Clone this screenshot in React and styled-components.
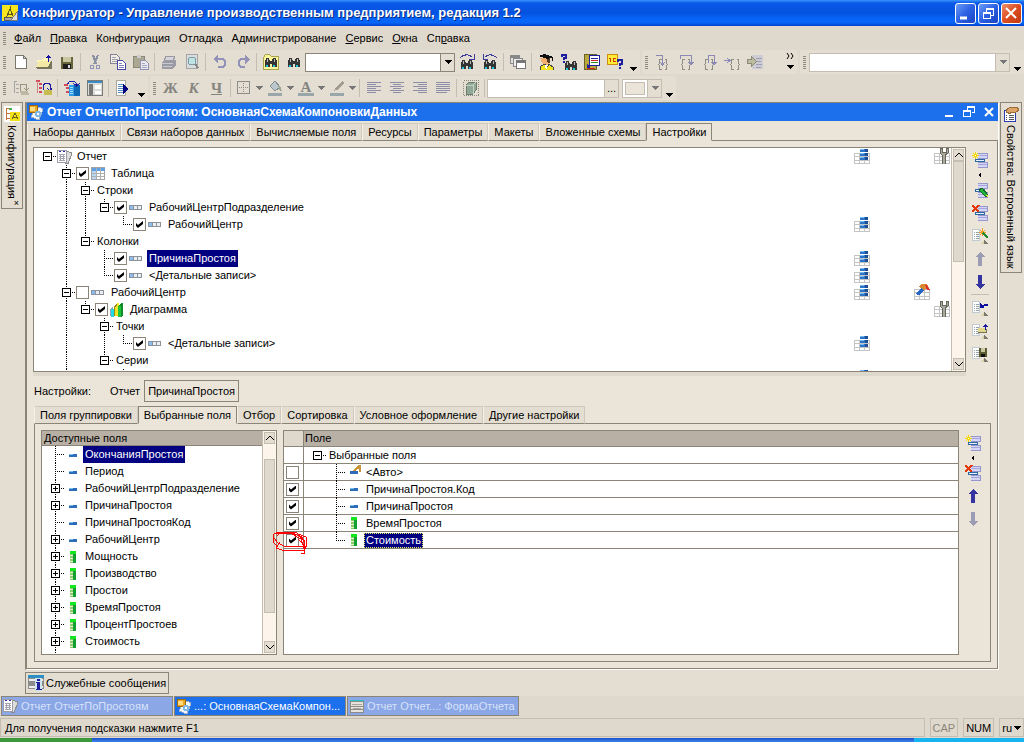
import React from 'react';
import styled, { createGlobalStyle, css } from 'styled-components';

const color = {
  face: '#dfd8cc',
  bar: '#e4ddd1',
  page: '#ebe4d9',
  edge: '#8b8578',
  soft: '#c5bdb0',
  head: '#b8b0a5',
  blue: '#1c70ec',
  select: '#000080',
};

/* ---------- icons ---------- */

const sheet = (
  <>
    <path d="M9 2l6 2-4 11-5-2z" fill="#dcdcdc" stroke="#8b8b8b" />
    <path d="M.5 1.500h9v12h-9z" fill="#fff" stroke="#9d9da8" />
    <path d="M2 2.500h2M6 2.500h2" stroke="#2a2ab0" />
    <path d="M2 5.500h6M2 7.500h6M2 9.500h6M2 11.500h6M3.500 5v7M6.500 5v7" stroke="#a4a4b0" />
  </>
);

const doc = (
  <>
    <path d="M.5 1.500h7v11h-7z" fill="#fff" stroke="#c2ccd0" />
    <path d="M2 4.500h1M4 4.500h3M2 6.500h1M4 6.500h3M2 8.500h1M4 8.500h3M2 10.500h1M4 10.500h3" stroke="#93a3a8" />
    <path d="M8 16l4-4v4z" fill="#d8d4ac" />
    <path d="M12 12l4 4h-4z" fill="#77776a" />
  </>
);

const levels = (
  <>
    <path d="M6 1h10v6H6zM6 10h10v6H6z" fill="#d5d5f6" />
    <path d="M6 1.500h10M6 6.500h10M6 10.500h10M6 15.500h10M15.500 1v6M15.500 10v6" stroke="#9797cf" />
    <path d="M6 3.500h9M6 12.500h9" stroke="#a5a5dc" />
    <path d="M3.500 7.500h9v2h-9z" fill="#e8f1ff" stroke="#2d68a0" />
  </>
);

const glasses = (
  <>
    <path d="M3 4h3l1 3v6H2V8zM10 4h3l1 4v5H9V7z" fill="#343434" />
    <path d="M6 7h4v3H6z" fill="#343434" />
    <path d="M4 5h1v3H4zM11 5h1v3h-1z" fill="#bbb" />
    <path d="M3 11h2v2H3zM10 11h2v2h-2z" fill="#18c8dc" />
  </>
);

const cogBraces = (
  <path d="M6.500 5.500h-2v4l-1 1 1 1v4h2M9.500 5.500h2v4l1 1-1 1v4h-2" fill="none" stroke="#8e8e84" />
);

const miniTable = (
  <>
    <path d="M.5 5.500h15v10H.5z" fill="#fff" stroke="#c4c4c4" />
    <path d="M1 8.500h14M1 12.500h14M5.500 6v9M10.500 6v9" stroke="#c4c4c4" />
  </>
);

const drawings = {
  app: (
    <>
      <path d="M0 0h16v16H0z" fill="#f7e61d" />
      <path d="M8 1v3M8 4L4 13M8 4l4 9M5 9h6" stroke="#5c5c20" fill="none" />
      <path d="M2 12h9v3H2z" fill="#aaa" stroke="#555" />
      <path d="M15 7v8H9z" fill="#ddd" stroke="#777" />
    </>
  ),
  blank: <path d="M2.500 1.500h8l3 3v10h-11zM10.500 1.500v3h3" fill="#fff" stroke="#77776e" />,
  open: (
    <>
      <path d="M1 6h5l1-2h6v4H1z" fill="#fff8b8" />
      <path d="M3 7h12l-3 6H0z" fill="#f4e8a4" />
      <path d="M0 13h12l3-6h1v8H1z" fill="#77745c" />
      <path d="M12.500 8V1M10 3.500h5M11 2.500h3" stroke="#1414a0" />
    </>
  ),
  save: (
    <>
      <path d="M2 3h12v12H2z" fill="#66663a" />
      <path d="M4 3h8v5H4z" fill="#c7c7a2" />
      <path d="M4 10h8v5H4z" fill="#1d1d1d" />
      <path d="M9 11h2v3H9z" fill="#ddd" />
    </>
  ),
  cut: (
    <>
      <path d="M6 1l3 9M11 1L7 10" stroke="#8a92a6" strokeWidth="2" />
      <circle cx="5" cy="13" r="2" fill="none" stroke="#9494b8" />
      <circle cx="11" cy="13" r="2" fill="none" stroke="#9494b8" />
    </>
  ),
  copy: (
    <>
      <path d="M.5.5h6l3 3v6h-9z" fill="#f1efe8" stroke="#828293" />
      <path d="M2 3.500h4M2 5.500h6M2 7.500h5" stroke="#a0a0a8" />
      <path d="M7.500 6.500h5l3 3v6h-8z" fill="#fff" stroke="#4747a4" />
      <path d="M9 9.500h3M9 11.500h5M9 13.500h5" stroke="#8080b8" />
    </>
  ),
  paste: (
    <>
      <path d="M.5 2.500h11v11H.5z" fill="#aaa890" stroke="#898979" />
      <path d="M4 1h4v3H4z" fill="#ccc" />
      <path d="M7.500 6.500h5l3 3v6h-8z" fill="#e9e9ee" stroke="#9090b0" />
      <path d="M9 9.500h3M9 11.500h5M9 13.500h5" stroke="#a4a4c4" />
    </>
  ),
  print: (
    <>
      <path d="M5 2h9l-2 5H3z" fill="#d5d5da" stroke="#9999a4" />
      <path d="M1 8l3-2h11v5l-3 4H1z" fill="#9b9ba5" />
      <path d="M1 9.500h11M2 12.500h9" stroke="#c9c9d0" />
    </>
  ),
  preview: (
    <>
      <path d="M2.500.5h11v14h-11z" fill="#d9dcdc" stroke="#a5a5a5" />
      <circle cx="8" cy="7" r="4" fill="#bfe3e4" stroke="#7e9aa4" />
      <path d="M11 10l3 4" stroke="#858585" strokeWidth="2" />
    </>
  ),
  undo: <path d="M6 1v3h4q4 0 4 5t-4 5H6v-2h3q3 0 3-3T9 6H6v4L1 5z" fill="#9293b7" />,
  redo: <path d="M10 1v3H7Q3 4 3 9t4 5h3v-2H8Q5 12 5 9t3-3h2v4l5-5z" fill="#9293b7" />,
  findAll: (
    <>
      <path d="M.5 3.500L2.500.5h4l2 2h7v13H.5z" fill="#fbf69c" stroke="#a8a34a" />
      {glasses}
    </>
  ),
  find: glasses,
  findNext: (
    <>
      <g transform="translate(0 2)">{glasses}</g>
      <path d="M1 4Q7-2 13 3M15 0v5h-5" stroke="#3c3c9c" fill="none" />
    </>
  ),
  findPrev: (
    <>
      <g transform="translate(0 2)">{glasses}</g>
      <path d="M15 4Q9-2 3 3M1 0v5h5" stroke="#3c3c9c" fill="none" />
    </>
  ),
  windows: (
    <>
      <path d="M.5 1.500h9v8h-9z" fill="#e5e2da" stroke="#8a8a8a" />
      <path d="M1 2.500h9" stroke="#888" strokeWidth="2" />
      <path d="M3.500 4.500h9v8h-9z" fill="#eee" stroke="#888" />
      <path d="M6.500 6.500h9v8h-9z" fill="#fff" stroke="#777" />
      <path d="M6 7.500h10" stroke="#777" strokeWidth="2" />
    </>
  ),
  student: (
    <>
      <path d="M2 4h8l1 5-3 3-4-3z" fill="#f1ad72" />
      <path d="M8 4h4v5h-2z" fill="#553a20" />
      <path d="M0 2l6-2 9 3-6 2zM14 3h1v4h-1z" fill="#111" />
      <path d="M2 16l1-4 4-2 2 3 2-3 4 3 1 3z" fill="#f2e31c" stroke="#444" />
      <path d="M7 11l1 5 2-5z" fill="#fff" />
    </>
  ),
  askFind: (
    <>
      <g transform="translate(2 3)">{glasses}</g>
      <path d="M1 3V1h4v3H3v2M3 7v2" stroke="#1d1da0" strokeWidth="2" fill="none" />
    </>
  ),
  book: (
    <>
      <path d="M.5.5h12v15H.5z" fill="#b9a83b" stroke="#6c6224" />
      <path d="M5.500 1.500h10v10h-10z" fill="#fff" stroke="#1f1fa0" />
      <path d="M7 4.500h7" stroke="#1f1fa0" />
      <path d="M7 6.500h7" stroke="#d02020" />
      <path d="M7 8.500h7" stroke="#2a8a2a" />
      <path d="M3 10l4 3-4 2z" fill="#1f1fa0" />
      <path d="M3 14.500h8" stroke="#d02020" />
    </>
  ),
  about: (
    <>
      <path d="M.5.5h10v10H.5z" fill="#ffec36" stroke="#cf8b12" />
      <path d="M3.500 4v4M2 4.500h1M9 4.500H6.500v3H9" stroke="#d43a10" fill="none" />
      <path d="M11 8V6h4v4h-2v2M13 13v2" stroke="#1d1da0" strokeWidth="2" fill="none" />
    </>
  ),
  stepIn: (
    <>
      {cogBraces}
      <path d="M1 1.500h6.500v9M5 8l2.500 3L10 8" stroke="#8a8ab4" fill="none" />
    </>
  ),
  stepOver: (
    <>
      {cogBraces}
      <path d="M2.500 5V1.500h11V8" stroke="#8a8ab4" fill="none" />
      <path d="M10 8h6l-3 4z" fill="#8a8ab4" />
    </>
  ),
  stepOut: (
    <>
      {cogBraces}
      <path d="M7.500 9V1.500h6V8" stroke="#8a8ab4" fill="none" />
      <path d="M10 8h6l-3 4z" fill="#8a8ab4" />
    </>
  ),
  runTo: (
    <>
      <g transform="translate(3 0)">{cogBraces}</g>
      <path d="M0 6.500h5M3 4l3 2.500L3 9" stroke="#8a8ab4" fill="none" />
    </>
  ),
  current: (
    <>
      <path d="M5 1h11v14H5z" fill="#ccccd2" />
      <path d="M9 4.500h6M9 7.500h5M9 10.500h6M9 13.500h5" stroke="#9c9cb4" />
      <path d="M.5 5.500h4v-3l5 5-5 5v-3h-4z" fill="#bcbca0" stroke="#8b8b78" />
    </>
  ),
  configOff: (
    <>
      <path d="M1.500 1v12M1 1.500h3M3 4.500h3M3 8.500h3M3 12.500h3" stroke="#a5a5a5" fill="none" />
      <path d="M7.500 11V4.500h6V9M11 8l2.500 2L16 8" stroke="#96967e" fill="none" />
      <path d="M7 11h8l1 4H8z" fill="#bbb9a4" />
    </>
  ),
  configOpen: (
    <>
      <path d="M0 1h4M3 4h3M3 8h3M3 12h3" stroke="#d04a5c" strokeWidth="2" />
      <path d="M1.500 1v12" stroke="#d48080" />
      <path d="M7.500 10V5l2-2h3l2 2v4M11 8l3 3 2-3" stroke="#1d1da0" fill="none" />
      <path d="M8 10h8v5H8z" fill="#c8bb52" />
    </>
  ),
  configDb: (
    <>
      <path d="M0 5h4M2 8h3M2 12h3" stroke="#d04a5c" strokeWidth="2" />
      <path d="M5 5h5v11H5z" fill="#2c9ae6" />
      <path d="M10 5h6v11h-6z" fill="#1168b4" />
      <path d="M6 7.500h3M6 9.500h3M6 11.500h3M6 13.500h3" stroke="#a8dcff" />
      <path d="M3.500 4l2-2.500h5l2 2V5M9 3l3.500 3L16 3" stroke="#1d1da0" fill="none" />
    </>
  ),
  layout: (
    <>
      <path d="M.5.5h15v15H.5z" fill="#dcdcd6" stroke="#7a7a78" />
      <path d="M1 2h14" stroke="#3c8ac8" strokeWidth="2" />
      <path d="M2 4h4v11H2z" fill="#777" />
      <path d="M8 5h6v4H8zM8 11h6v3H8z" fill="#fff" />
    </>
  ),
  debug: (
    <>
      <path d="M1.500.5h9v15h-9z" fill="#fff" stroke="#a9a9a0" />
      <path d="M3 4.500h5M3 6.500h5M3 8.500h5M3 10.500h5M3 12.500h5" stroke="#5a8fc2" />
      <path d="M8 4l6 5-6 5z" fill="#000080" />
    </>
  ),
  border: (
    <>
      <path d="M1.500 1.500h12v12h-12z" fill="none" stroke="#8c8c88" />
      <path d="M7.500 3v10M3 7.500h10" stroke="#8c8c88" strokeDasharray="1 1" />
    </>
  ),
  fill: (
    <>
      <path d="M3 6l5-5 5 6-5 4z" fill="#bcc8cc" stroke="#7f8f94" />
      <path d="M12 6l2 5" stroke="#98a890" strokeWidth="2" />
      <path d="M1 13h14v3H1z" fill="#99a7ab" />
    </>
  ),
  brush: (
    <>
      <path d="M14 0L8 6 5 11l5-2 5-6z" fill="#a49a90" />
      <path d="M1 13h14v3H1z" fill="#99a7ab" />
    </>
  ),
  left: <path d="M1 2.500h14M1 4.500h9M1 6.500h14M1 8.500h9M1 10.500h14M1 12.500h9" stroke="#8e8ea8" />,
  center: <path d="M1 2.500h14M4 4.500h8M1 6.500h14M4 8.500h8M1 10.500h14M4 12.500h8" stroke="#8e8ea8" />,
  right: <path d="M1 2.500h14M6 4.500h9M1 6.500h14M6 8.500h9M1 10.500h14M6 12.500h9" stroke="#8e8ea8" />,
  justify: <path d="M1 2.500h14M1 4.500h14M1 6.500h14M1 8.500h14M1 10.500h14M1 12.500h11" stroke="#8e8ea8" />,
  cube: (
    <>
      <path d="M.5.5h15v15H.5z" fill="none" stroke="#88887c" strokeDasharray="1 1" />
      <path d="M3 5l3-3h7v8l-3 4H3z" fill="#92a896" stroke="#6d7d70" />
      <path d="M3 5h7v9M10 5l3-3" stroke="#c2d2c4" fill="none" />
    </>
  ),
  config: (
    <>
      <path d="M0 0h16v16H0z" fill="#fff" />
      <path d="M2.500 2v12M3 2.500h3M3 7.500h3M3 12.500h3" stroke="#c87038" fill="none" />
      <path d="M5 2h3v2H5z" fill="#42b04c" />
      <path d="M6 6h10v9H6z" fill="#f2df18" />
      <path d="M11 7l-3 6M11 7l3 6M9 11h4" stroke="#6b6420" fill="none" />
    </>
  ),
  props: (
    <>
      <path d="M1.500 4.500h11v11h-11z" fill="#fff" stroke="#2a3ab0" />
      <path d="M3 9.500h1M6 9.500h5M3 11.500h1M6 11.500h5M3 13.500h1M6 13.500h5" stroke="#555" />
      <path d="M3 4l5-3h6l2 3-4 3-3-1-3 2-1-2-2 1z" fill="#dda468" stroke="#9c6c38" />
    </>
  ),
  schema: (
    <>
      <path d="M8 2l7 3-4 11-8-3z" fill="#f2f6fa" stroke="#a3b4c8" />
      <path d="M1 1h8v7H1z" fill="#e8a824" stroke="#9c6810" />
      <path d="M2 3h5v4H2z" fill="#fbdc84" />
      <circle cx="10" cy="10" r="3" fill="#7fb8e8" />
      <circle cx="10" cy="10" r="1" fill="#fff" />
    </>
  ),
  form: (
    <>
      <path d="M1 2h14v13H1z" fill="#8a8a8a" />
      <path d="M1 2.500h14" stroke="#28c4c8" />
      <path d="M2 4h12v4H2zM2 9h12v2H2zM2 12h12v2H2z" fill="#e8e4dc" />
      <path d="M3 6.500h10M4 10.500h8" stroke="#a5a5a0" />
    </>
  ),
  message: (
    <>
      <path d="M0 1h16v13H0z" fill="#8c8c8c" />
      <path d="M1 4h14v2H1zM1 11h14v2H1z" fill="#eee" />
      <path d="M0 1.500h16" stroke="#2d8fc4" strokeWidth="3" />
      <path d="M7 3h7v13H7z" fill="#cfe4ec" />
      <path d="M9 4h3v2H9zM8 7h4v7h2v1H8v-1h1V8H8z" fill="#20209c" />
    </>
  ),
  report: sheet,
  table: (
    <>
      <path d="M.5 1.500h13v12H.5z" fill="#fff" stroke="#a3a3a3" />
      <path d="M1 2h13v3H1z" fill="#5fa1e6" />
      <path d="M1 5h4v8H1z" fill="#b9d6f4" />
      <path d="M1 7.500h12M1 10.500h12M5.500 2v11M9.500 2v11" stroke="#b0b0b0" />
    </>
  ),
  group: (
    <>
      <path d="M.5 5.500h12v4H.5z" fill="#eceff2" stroke="#8b9299" />
      <path d="M1 6h3v3H1z" fill="#8bbdf0" />
      <path d="M4.500 6v3M8.500 6v3" stroke="#8b9299" />
    </>
  ),
  chart: (
    <>
      <path d="M0 7l3-3v10H0z" fill="#9ba0a6" />
      <path d="M1 7h3v8H1z" fill="#25d8e6" />
      <path d="M5 3l2-2h2v13H5z" fill="#f2e426" />
      <path d="M4 4l3-3v2L5 5v9H4z" fill="#938a18" />
      <path d="M8 4l3-3h2v12l-2 2H8z" fill="#118a28" />
      <path d="M8 4h3v11H8z" fill="#1fc43d" />
    </>
  ),
  list: (
    <>
      {miniTable}
      <path d="M6 1h8v3H6zM6 5h8v3H6zM6 9h8v3H6z" fill="#2b74c8" />
      <path d="M6 1h4v1H6zM6 5h4v1H6zM6 9h4v1H6z" fill="#78b8f4" />
      <path d="M11 1h3v3h-3zM11 5h3v3h-3zM11 9h3v3h-3z" fill="#1d4f94" />
    </>
  ),
  wrench: (
    <>
      {miniTable}
      <path d="M6 0v5l2 2v9h3V7l3-2V0h-2v4H8V0z" fill="#a9a9a0" stroke="#66665a" />
    </>
  ),
  paint: (
    <>
      {miniTable}
      <path d="M4 3l3-3h6l2 4-5 2-3-2z" fill="#d88830" />
      <path d="M11 1h2l3 5h-3z" fill="#e03030" />
      <path d="M1 10l6-6 3 2-5 5z" fill="#2a66c4" />
    </>
  ),
  field: (
    <>
      <path d="M0 7h8v3H0z" fill="#2c6cb8" />
      <path d="M0 7h4v1H0z" fill="#7cc0ee" />
    </>
  ),
  auto: (
    <>
      <path d="M0 7h8v3H0z" fill="#2c6cb8" />
      <path d="M3 7l5-6h3v7H9V5H7L5 7z" fill="#c8943c" />
    </>
  ),
  resource: (
    <>
      <path d="M1 2h6v12H1z" fill="#8ccc6c" />
      <path d="M1 2h6v3H1z" fill="#12e61c" />
      <path d="M4 5h3v9H4z" fill="#12a032" />
      <path d="M1 6.500h3M1 9.500h3M1 12.500h3" stroke="#e2f0cc" />
    </>
  ),
  addLevel: (
    <>
      {levels}
      <path d="M3.500 0v7M0 3.500h7M1 1l5 5M6 1L1 6" stroke="#f4d800" />
      <path d="M3 3h1v1H3z" fill="#fff" />
    </>
  ),
  editLevel: (
    <>
      {levels}
      <path d="M7 8l3-2 6 7-1 2-2-1z" fill="#22b43c" stroke="#136a22" />
      <path d="M13 13l3 3v-3z" fill="#f3e23a" />
    </>
  ),
  dropLevel: (
    <>
      {levels}
      <path d="M0 0l7 7M7 0L0 7" stroke="#e2380c" strokeWidth="2" />
    </>
  ),
  wizard: (
    <>
      {doc}
      <path d="M10.500 0v8M7 4.500h7M8 2l5 5M13 2L8 7" stroke="#f29a1c" />
      <path d="M11 5l5 5" stroke="#1c8a2c" strokeWidth="2" />
    </>
  ),
  up: <path d="M8 1l5 5h-3v9H6V6H3z" />,
  down: <path d="M8 15l5-5h-3V1H6v9H3z" />,
  restore: (
    <>
      {doc}
      <path d="M8 8V3l2 2 3-1h3v2h-3l-2 1 1 1z" fill="#0c0ca0" />
    </>
  ),
  load: (
    <>
      {doc}
      <path d="M6 5h8v5H6z" fill="#e3d88a" />
      <path d="M6 9h8V6h1v4H6z" fill="#77745c" />
      <path d="M13.500 7V1M11 3.500h5M12 2.500h3" stroke="#1c1c9c" />
    </>
  ),
  store: (
    <>
      {doc}
      <path d="M7 2h8v9H7z" fill="#5c5a32" />
      <path d="M9 2h4v4H9z" fill="#c7c7a2" />
      <path d="M9 8h4v3H9z" fill="#111" />
    </>
  ),
};

const Icon = ({ name, width = 16, fill }) => (
  <Drawing
    aria-hidden="true"
    width={width}
    height="16"
    viewBox={`0 0 ${width} 16`}
    fill={fill}
    shapeRendering="crispEdges"
  >
    {drawings[name]}
  </Drawing>
);

const Arrow = ({ direction = 'down', fill = '#000' }) => (
  <Drawing aria-hidden="true" width="8" height="8" viewBox="0 0 8 8" fill={fill} shapeRendering="crispEdges">
    {direction === 'down' ? <path d="M0 2h8L4 6z" /> : <path d="M5 1v6L2 4z" />}
  </Drawing>
);

/* ---------- tree parts ---------- */

// one letter per indent step: | line, T branch, L last branch,
// m / M minus box (M has its line going on below), P plus box, r root box
const Step = ({ kind }) => {
  const box = 'mMPr'.includes(kind);
  const above = '|TLmMP'.includes(kind);
  const below = '|TMP'.includes(kind);
  return (
    <StepBox aria-hidden="true" width="19" height="17" viewBox="0 0 19 17" shapeRendering="crispEdges">
      <g stroke="#000" fill="none" strokeDasharray="1 1">
        {above && <path d="M9.500 0v9" />}
        {below && <path d="M9.500 8v9" />}
        {'TLmMPr'.includes(kind) && <path d="M9 8.500h10" />}
      </g>
      {box && <path d="M5.500 4.500h8v8h-8z" fill="#fff" stroke="#000" />}
      {box && <path d="M7 8.500h5" stroke="#000" />}
      {kind === 'P' && <path d="M9.500 6v5" stroke="#000" />}
    </StepBox>
  );
};

const TreeName = ({ steps, check, icon, iconWidth = 16, text, selected, focused }) => (
  <NameBox>
    {steps.split('').map((kind, i) => <Step key={i} kind={kind} />)}
    {check !== undefined && <CheckBox aria-label={text} defaultChecked={check} />}
    {icon && (
      <IconSlot $wide={iconWidth} $bare={check === undefined}>
        <Icon name={icon} width={iconWidth} />
      </IconSlot>
    )}
    {text && <NameText $selected={selected} $focused={focused}>{text}</NameText>}
  </NameBox>
);

const ScrollBar = ({ before, thumb, after }) => (
  <Track>
    <ScrollButton aria-label="Вверх">
      <svg width="10" height="6" viewBox="0 0 10 6"><path d="M1 5l4-4 4 4" fill="none" stroke="#000" /></svg>
    </ScrollButton>
    <Space $grow={before} />
    <Thumb $grow={thumb} />
    <Space $grow={after} />
    <ScrollButton aria-label="Вниз">
      <svg width="10" height="6" viewBox="0 0 10 6"><path d="M1 1l4 4 4-4" fill="none" stroke="#000" /></svg>
    </ScrollButton>
  </Track>
);

/* ---------- data ---------- */

const menu = [
  ['', 'Ф', 'айл'],
  ['', 'П', 'равка'],
  ['Конфигурация', '', ''],
  ['Отладка', '', ''],
  ['Администрирование', '', ''],
  ['', 'С', 'ервис'],
  ['', 'О', 'кна'],
  ['Сп', 'р', 'авка'],
];

const pages = [
  'Наборы данных', 'Связи наборов данных', 'Вычисляемые поля', 'Ресурсы',
  'Параметры', 'Макеты', 'Вложенные схемы', 'Настройки',
];

const settingPages = [
  'Поля группировки', 'Выбранные поля', 'Отбор', 'Сортировка',
  'Условное оформление', 'Другие настройки',
];

const structure = [
  { steps: 'r', icon: 'report', text: 'Отчет', list: true, wrench: true },
  { steps: ' M', check: true, icon: 'table', text: 'Таблица' },
  { steps: ' |M', text: 'Строки' },
  { steps: ' ||m', check: true, icon: 'group', text: 'РабочийЦентрПодразделение' },
  { steps: ' || L', check: true, icon: 'group', text: 'РабочийЦентр', list: true },
  { steps: ' |m', text: 'Колонки' },
  { steps: ' | T', check: true, icon: 'group', text: 'ПричинаПростоя', list: true, selected: true },
  { steps: ' | L', check: true, icon: 'group', text: '<Детальные записи>', list: true },
  { steps: ' M', check: false, icon: 'group', text: 'РабочийЦентр', list: true, paint: true },
  { steps: ' |m', check: true, icon: 'chart', text: 'Диаграмма', wrench: true },
  { steps: ' | M', text: 'Точки' },
  { steps: ' | |L', check: true, icon: 'group', text: '<Детальные записи>', list: true },
  { steps: ' | m', text: 'Серии' },
  { steps: ' |  L', list: true },
];

const available = [
  { steps: 'T', icon: 'field', text: 'ОкончанияПростоя', selected: true },
  { steps: 'T', icon: 'field', text: 'Период' },
  { steps: 'P', icon: 'field', text: 'РабочийЦентрПодразделение' },
  { steps: 'P', icon: 'field', text: 'ПричинаПростоя' },
  { steps: 'T', icon: 'field', text: 'ПричинаПростояКод' },
  { steps: 'P', icon: 'field', text: 'РабочийЦентр' },
  { steps: 'P', icon: 'resource', text: 'Мощность' },
  { steps: 'P', icon: 'resource', text: 'Производство' },
  { steps: 'P', icon: 'resource', text: 'Простои' },
  { steps: 'P', icon: 'resource', text: 'ВремяПростоя' },
  { steps: 'P', icon: 'resource', text: 'ПроцентПростоев' },
  { steps: 'P', icon: 'resource', text: 'Стоимость' },
  { steps: '|' },
];

const chosen = [
  { steps: 'r', text: 'Выбранные поля' },
  { steps: ' T', icon: 'auto', text: '<Авто>', use: false },
  { steps: ' T', icon: 'field', text: 'ПричинаПростоя.Код', use: true },
  { steps: ' T', icon: 'field', text: 'ПричинаПростоя', use: true },
  { steps: ' T', icon: 'resource', text: 'ВремяПростоя', use: true },
  { steps: ' L', icon: 'resource', text: 'Стоимость', use: true, selected: true, marked: true },
];

/* ---------- page ---------- */

const Tools = ({ names }) => names.map((name, i) => (
  name === '|'
    ? <Divider key={i} />
    : <ToolButton key={i} aria-label={name}><Icon name={name} /></ToolButton>
));

const App = () => (
  <>
    <GlobalStyle />
    <Window>
      <TitleBar>
        <Icon name="app" />
        <Title>Конфигуратор - Управление производственным предприятием, редакция 1.2</Title>
        <Caption aria-label="Свернуть">
          <svg width="19" height="19" viewBox="0 0 19 19"><path d="M4 14h7" stroke="#fff" strokeWidth="3" /></svg>
        </Caption>
        <Caption aria-label="Восстановить">
          <svg width="19" height="19" viewBox="0 0 19 19" shapeRendering="crispEdges" fill="none" stroke="#fff">
            <path d="M7.500 8V5.500h7v6H12M7 4.500h8M4.500 8.500h7v6h-7zM4 9.500h8" />
          </svg>
        </Caption>
        <Caption $close aria-label="Закрыть">
          <svg width="19" height="19" viewBox="0 0 19 19"><path d="M4 4l10 10M14 4L4 14" stroke="#fff" strokeWidth="2" /></svg>
        </Caption>
      </TitleBar>

      <MenuBar>
        <Grip />
        {menu.map(([start, key, end]) => (
          <MenuItem key={start + key + end}>{start}<u>{key}</u>{end}</MenuItem>
        ))}
      </MenuBar>

      <ToolRow>
        <ToolGroup>
          <Grip />
          <Tools names={['blank', 'open', 'save', '|', 'cut', 'copy', 'paste', '|', 'print', 'preview', '|', 'undo', 'redo', '|', 'findAll', 'find']} />
          <Combo $width={150}>
            <Select aria-label="Поиск" />
            <ComboArrow><Arrow /></ComboArrow>
          </Combo>
          <Tools names={['findNext', 'findPrev', '|', 'windows', '|', 'student', 'askFind', 'book', 'about']} />
          <More aria-label="Еще"><Arrow /></More>
        </ToolGroup>
        <ToolGroup $wide={156}>
          <Grip />
          <Tools names={['stepIn', 'stepOver', 'stepOut', 'runTo', 'current']} />
          <Overflow aria-label="Показать остальные">
            <svg width="8" height="6" viewBox="0 0 8 6"><path d="M1 0l2 3-2 3M5 0l2 3-2 3" fill="none" stroke="#000" /></svg>
            <Arrow />
          </Overflow>
        </ToolGroup>
        <ToolGroup $fill>
          <Grip />
          <Combo $dim $fill>
            <Select aria-label="Процедуры" />
            <ComboArrow $dim><Arrow fill="#777" /></ComboArrow>
          </Combo>
          <More aria-label="Еще"><Arrow /></More>
        </ToolGroup>
      </ToolRow>

      <ToolRow>
        <ToolGroup>
          <Grip />
          <Tools names={['configOff', 'configOpen', '|', 'configDb', 'layout', '|', 'debug']} />
          <More aria-label="Еще"><Arrow /></More>
        </ToolGroup>
        <ToolGroup>
          <Grip />
          <ToolButton><Glyph>Ж</Glyph></ToolButton>
          <ToolButton><Glyph $italic>К</Glyph></ToolButton>
          <ToolButton><Glyph $underline>Ч</Glyph></ToolButton>
          <Divider />
          {['border', 'fill', 'letter', 'brush'].map(name => (
            <SplitButton key={name} aria-label={name}>
              {name === 'letter' ? <Inked><Glyph>А</Glyph></Inked> : <Icon name={name} />}
              <Arrow fill="#777" />
            </SplitButton>
          ))}
          <Tools names={['|', 'left', 'center', 'right', 'justify', '|', 'cube', '|']} />
          <Combo $dim $width={132}>
            <TextInput aria-label="Формат" />
            <ComboArrow $dim>...</ComboArrow>
          </Combo>
          <ColorCombo>
            <Swatch />
            <ComboArrow $dim><Arrow fill="#777" /></ComboArrow>
          </ColorCombo>
          <More aria-label="Еще"><Arrow /></More>
        </ToolGroup>
      </ToolRow>

      <Workspace>
        <Dock>
          <DockTab>
            <Icon name="config" />
            <span>Конфигурация</span>
            <small>×</small>
          </DockTab>
        </Dock>

        <Document>
          <DocTitle>
            <Icon name="schema" />
            <h1>Отчет ОтчетПоПростоям: ОсновнаяСхемаКомпоновкиДанных</h1>
            <DocButton aria-label="Свернуть">
              <svg width="12" height="12" viewBox="0 0 12 12"><path d="M2 10h8" stroke="#fff" strokeWidth="2" /></svg>
            </DocButton>
            <DocButton aria-label="Восстановить">
              <svg width="12" height="12" viewBox="0 0 12 12" shapeRendering="crispEdges" fill="none" stroke="#fff">
                <path d="M4.500 4V1.500h7v5H9M4 .5h8M.5 5.500h7v5h-7zM0 4.500h8" />
              </svg>
            </DocButton>
            <DocButton aria-label="Закрыть">
              <svg width="12" height="12" viewBox="0 0 12 12"><path d="M2 2l8 8M10 2l-8 8" stroke="#fff" strokeWidth="2" /></svg>
            </DocButton>
          </DocTitle>

          <Tabs>
            {pages.map(name => <Tab key={name} $active={name === 'Настройки'}>{name}</Tab>)}
            <TabRest />
          </Tabs>

          <Page>
            <Upper>
              <TreeView>
                <Rows>
                  {structure.map(({ list, paint, wrench, ...row }, i) => (
                    <StructureRow key={i}>
                      <TreeName {...row} />
                      <Cell>{list && <Icon name="list" />}</Cell>
                      <Cell>{paint && <Icon name="paint" />}</Cell>
                      <Cell>{wrench && <Icon name="wrench" />}</Cell>
                    </StructureRow>
                  ))}
                </Rows>
                <ScrollBar before={0} thumb={100} after={97} />
              </TreeView>
              <SideBar>
                <SideButton aria-label="Добавить"><Icon name="addLevel" /></SideButton>
                <SideHint><Arrow direction="left" /></SideHint>
                <SideButton aria-label="Изменить"><Icon name="editLevel" /></SideButton>
                <SideButton aria-label="Удалить"><Icon name="dropLevel" /></SideButton>
                <SideButton aria-label="Конструктор"><Icon name="wizard" /></SideButton>
                <SideButton aria-label="Вверх"><Icon name="up" fill="#9c9db4" /></SideButton>
                <SideButton aria-label="Вниз"><Icon name="down" fill="#3533a0" /></SideButton>
                <SideLine />
                <SideButton aria-label="Стандартные"><Icon name="restore" /></SideButton>
                <SideButton aria-label="Загрузить"><Icon name="load" /></SideButton>
                <SideButton aria-label="Сохранить"><Icon name="store" /></SideButton>
              </SideBar>
            </Upper>

            <Splitter />

            <Scope>
              <ScopeLabel>Настройки:</ScopeLabel>
              <ScopeButton>Отчет</ScopeButton>
              <ScopeButton $active>ПричинаПростоя</ScopeButton>
            </Scope>

            <Tabs $inner>
              {settingPages.map(name => <Tab key={name} $active={name === 'Выбранные поля'}>{name}</Tab>)}
              <TabRest />
            </Tabs>

            <Lower>
              <FieldList>
                <FieldColumn>
                  <ListHead>Доступные поля</ListHead>
                  <Rows>
                    {available.map((row, i) => (
                      <FieldRow key={i}><TreeName {...row} iconWidth={12} /></FieldRow>
                    ))}
                  </Rows>
                </FieldColumn>
                <ScrollBar before={15} thumb={155} after={29} />
              </FieldList>

              <Chosen>
                <ChosenTable>
                  <thead>
                    <tr>
                      <th aria-label="Использование" />
                      <th>Поле</th>
                    </tr>
                  </thead>
                  <tbody>
                    {chosen.map(({ use, marked, ...row }) => (
                      <tr key={row.text}>
                        <td>
                          <Mark>
                            {use !== undefined && <CheckBox aria-label={row.text} defaultChecked={use} />}
                            {marked && (
                              <Scribble
                                aria-hidden="true"
                                width="36"
                                height="26"
                                viewBox="0 0 36 26"
                                fill="none"
                                stroke="#f00"
                                shapeRendering="crispEdges"
                              >
                                <path d="M1 4v8l3 3v3l6 2h22l2-3V7l-8-3-2-2H6L2 4" />
                                <path d="M3 3h17l10 4 3 8M5 6l3-3h10l11 6 2 6v4" />
                                <path d="M2 8l4 5 6 3h19M26 5l6 5v13h-3M8 12L4 18M26 9l8 8" />
                              </Scribble>
                            )}
                          </Mark>
                        </td>
                        <td><TreeName {...row} iconWidth={12} focused={row.selected} /></td>
                      </tr>
                    ))}
                  </tbody>
                </ChosenTable>
              </Chosen>

              <SideBar>
                <SideButton aria-label="Добавить"><Icon name="addLevel" /></SideButton>
                <SideHint><Arrow direction="left" /></SideHint>
                <SideButton aria-label="Удалить"><Icon name="dropLevel" /></SideButton>
                <SideButton aria-label="Вверх"><Icon name="up" fill="#3533a0" /></SideButton>
                <SideButton aria-label="Вниз"><Icon name="down" fill="#9c9db4" /></SideButton>
              </SideBar>
            </Lower>
          </Page>
        </Document>

        <Dock>
          <DockTab>
            <Icon name="props" />
            <span>Свойства: Встроенный язык</span>
          </DockTab>
        </Dock>
      </Workspace>

      <MessageBar>
        <MessageButton><Icon name="message" />Служебные сообщения</MessageButton>
      </MessageBar>

      <WindowBar>
        <WindowButton><Icon name="report" />Отчет ОтчетПоПростоям</WindowButton>
        <WindowButton $active><Icon name="schema" />...: ОсновнаяСхемаКомпон...</WindowButton>
        <WindowButton><Icon name="form" />Отчет Отчет...: ФормаОтчета</WindowButton>
      </WindowBar>

      <StatusBar>
        <StatusText>Для получения подсказки нажмите F1</StatusText>
        <StatusCell $off>CAP</StatusCell>
        <StatusCell>NUM</StatusCell>
        <StatusCell>ru<Arrow /></StatusCell>
      </StatusBar>
      <Desktop />
    </Window>
  </>
);

export default App;

/* ---------- styles ---------- */

const GlobalStyle = createGlobalStyle`
  * { box-sizing: border-box; }
  body {
    margin: 0;
    background: ${color.bar};
    font: 11px/16px "Liberation Sans", Arial, sans-serif;
    color: #000;
  }
  button, input, select {
    font: inherit;
    color: inherit;
    margin: 0;
    padding: 0;
    border: 0;
    background: none;
    border-radius: 0;
  }
  button { white-space: nowrap; }
`;

const Drawing = styled.svg`
  display: block;
  flex: none;
`;

const Window = styled.div`
  display: flex;
  flex-direction: column;
  height: 100vh;
  min-height: 600px;
  overflow: hidden;
`;

const TitleBar = styled.header`
  flex: none;
  display: flex;
  align-items: center;
  height: 26px;
  padding: 0 2px;
  gap: 2px;
  background: linear-gradient(#3a93ff 0, #0a58e6 12%, #0453e0 50%, #0766fa 75%, #0765f8 88%, #0040c8 100%);
`;
const Title = styled.div`
  flex: 1;
  padding-left: 2px;
  color: #fff;
  font-size: 13px;
  font-weight: bold;
  text-shadow: 1px 1px 0 #0c2a80;
  white-space: nowrap;
`;
const Caption = styled.button`
  display: grid;
  place-items: center;
  width: 21px;
  height: 21px;
  border: 1px solid #fff;
  border-radius: 3px;
  background: ${props => (props.$close
    ? 'linear-gradient(135deg, #f0906c, #dc4c20 50%, #c03a10)'
    : 'linear-gradient(135deg, #6c9cf8, #2c60e4 50%, #1844c0)')};
`;

const MenuBar = styled.nav`
  flex: none;
  display: flex;
  align-items: center;
  gap: 1px;
  height: 24px;
  background: ${color.face};
`;
const MenuItem = styled.button`
  padding: 0 4px;
`;
const Grip = styled.span`
  flex: none;
  width: 3px;
  height: 13px;
  margin: 0 3px;
  background: repeating-linear-gradient(#8f887b 0 1px, transparent 1px 2px);
`;

const ToolRow = styled.div`
  flex: none;
  display: flex;
  gap: 2px;
  height: 26px;
  padding-bottom: 2px;
  background: ${color.face};
`;
const ToolGroup = styled.div`
  display: flex;
  align-items: center;
  background: ${color.bar};
  border-radius: 2px;
  ${props => props.$wide && css`width: ${props.$wide}px;`}
  ${props => props.$fill && css`flex: 1;`}
`;
const ToolButton = styled.button`
  display: grid;
  place-items: center;
  width: 23px;
  height: 22px;
`;
const SplitButton = styled.button`
  display: flex;
  align-items: center;
  gap: 3px;
  width: 31px;
  padding-left: 3px;
  height: 22px;
`;
const Divider = styled.span`
  width: 1px;
  height: 18px;
  margin: 0 2px;
  background: ${color.soft};
`;
const Glyph = styled.b`
  color: #85857f;
  font: bold 15px/14px "Liberation Serif", serif;
  font-style: ${props => (props.$italic ? 'italic' : 'normal')};
  text-decoration: ${props => (props.$underline ? 'underline' : 'none')};
`;
const Inked = styled.span`
  display: grid;
  place-items: center;
  width: 16px;
  height: 16px;
  border-bottom: 3px solid #99a7ab;
`;
const Combo = styled.div`
  display: flex;
  height: 19px;
  border: 1px solid ${props => (props.$dim ? color.soft : color.edge)};
  background: #fff;
  ${props => props.$width && css`width: ${props.$width}px;`}
  ${props => props.$fill && css`flex: 1;`}
`;
const ColorCombo = styled(Combo).attrs({ $dim: true })`
  width: 40px;
  margin-left: 3px;
`;
const Select = styled.select`
  flex: 1;
  min-width: 0;
  appearance: none;
  background: #fff;
`;
const TextInput = styled.input`
  flex: 1;
  min-width: 0;
  background: #fff;
`;
const ComboArrow = styled.span`
  display: grid;
  place-items: center;
  width: 14px;
  background: ${color.bar};
  border-left: 1px solid ${props => (props.$dim ? color.soft : color.edge)};
`;
const Swatch = styled.span`
  flex: 1;
  margin: 2px;
  background: ${color.page};
  border: 1px solid ${color.soft};
`;
const More = styled.button`
  align-self: flex-end;
  padding: 0 3px;
  height: 10px;
`;
const Overflow = styled.button`
  display: flex;
  flex-direction: column;
  justify-content: space-between;
  height: 18px;
  margin-left: auto;
  padding-right: 4px;
`;

const Workspace = styled.main`
  flex: 1;
  min-height: 0;
  display: flex;
  background: ${color.bar};
`;
const Dock = styled.aside`
  flex: none;
  width: 25px;
  padding: 0 1px;
`;
const DockTab = styled.button`
  display: flex;
  flex-direction: column;
  align-items: center;
  gap: 3px;
  width: 22px;
  padding: 3px 0;
  border: 1px solid ${color.edge};
  span { writing-mode: vertical-rl; }
  small {
    align-self: flex-end;
    padding-right: 3px;
    font-size: 9px;
    line-height: 3px;
  }
`;
const Document = styled.section`
  flex: 1;
  min-width: 0;
  display: flex;
  flex-direction: column;
  border: 1px solid ${color.edge};
  border-left-width: 2px;
  border-right-color: #fff;
  border-bottom-color: #fff;
  background: ${color.page};
`;
const DocTitle = styled.div`
  flex: none;
  display: flex;
  align-items: center;
  height: 18px;
  padding: 0 3px 0 1px;
  background: ${color.blue};
  color: #fff;
  h1 {
    flex: 1;
    margin: 0;
    padding-left: 3px;
    font-size: 12px;
    white-space: nowrap;
  }
`;
const DocButton = styled.button`
  width: 12px;
  height: 12px;
  margin-left: 8px;
`;

const Tabs = styled.div`
  flex: none;
  display: flex;
  align-items: stretch;
  height: 18px;
  margin: ${props => (props.$inner ? '4px 6px 0 1px' : '2px 0 0')};
`;
const Tab = styled.button`
  padding: 0 5px;
  border: 1px solid #cfc8bb;
  border-left-color: ${props => (props.$active ? color.edge : '#f5f1ea')};
  border-bottom-color: ${color.edge};
  background: ${color.bar};
  ${props => props.$active && css`
    border-color: ${color.edge};
    border-bottom-color: transparent;
    background: ${color.page};
  `}
`;
const TabRest = styled.span`
  flex: 1;
  border-bottom: 1px solid ${color.edge};
`;

const Page = styled.div`
  flex: 1;
  min-height: 0;
  display: flex;
  flex-direction: column;
  padding: 6px 0 6px 6px;
  border-right: 1px solid ${color.edge};
  border-bottom: 1px solid ${color.edge};
`;
const Upper = styled.div`
  flex: 1 1 225px;
  min-height: 0;
  display: flex;
  padding-right: 4px;
`;
const TreeView = styled.div`
  flex: 1;
  min-width: 0;
  display: flex;
  border: 1px solid ${color.edge};
  background: #fff;
`;
const Rows = styled.ul`
  flex: 1;
  min-width: 0;
  min-height: 0;
  margin: 0;
  padding: 0;
  overflow: hidden;
  list-style: none;
`;
const StructureRow = styled.li`
  display: grid;
  grid-template-columns: 1fr 60px 20px 20px;
  height: 17px;
  padding-left: 4px;
`;
const Cell = styled.span`
  padding-left: 3px;
`;
const FieldRow = styled.li`
  height: 17px;
  padding-left: 4px;
`;
const NameBox = styled.div`
  display: flex;
  align-items: center;
  height: 17px;
`;
const StepBox = styled.svg`
  display: block;
  flex: none;
`;
const IconSlot = styled.span`
  box-sizing: content-box;
  width: 18px;
  padding-left: 2px;
  ${props => props.$bare && css`padding-left: 0;`}
  ${props => props.$wide === 12 && css`
    width: 14px;
    padding-left: 4px;
  `}
`;
const NameText = styled.span`
  line-height: 17px;
  padding: 0 2px;
  white-space: nowrap;
  ${props => props.$selected && css`
    color: #fff;
    background: ${color.select};
  `}
  ${props => props.$focused && css`
    line-height: 15px;
    outline: 1px dotted #e8e85c;
    outline-offset: -1px;
  `}
`;
const CheckBox = styled.input.attrs({ type: 'checkbox' })`
  appearance: none;
  flex: none;
  display: grid;
  place-items: center;
  width: 13px;
  height: 13px;
  border: 1px solid ${color.edge};
  background: #fff;
  &:checked::before {
    content: '';
    width: 7px;
    height: 7px;
    background: #000;
    clip-path: polygon(0 28%, 28% 58%, 100% 0, 100% 42%, 28% 100%, 0 70%);
  }
`;

const Track = styled.div`
  flex: none;
  display: flex;
  flex-direction: column;
  width: 14px;
  padding: 1px;
  border-left: 1px solid ${color.soft};
  background: #fdf5eb;
`;
const ScrollButton = styled.button`
  flex: none;
  display: grid;
  place-items: center;
  height: 12px;
  border: 1px solid ${color.soft};
  background: ${color.bar};
`;
const Space = styled.span`
  flex: ${props => props.$grow} 1 0;
`;
const Thumb = styled.span`
  flex: ${props => props.$grow} 1 0;
  border: 1px solid ${color.soft};
  background: ${color.face};
`;

const SideBar = styled.div`
  flex: none;
  display: flex;
  flex-direction: column;
  align-items: center;
  width: 27px;
  padding-top: 1px;
`;
const SideButton = styled.button`
  flex: none;
  display: grid;
  place-items: center;
  width: 23px;
  height: 23px;
`;
const SideHint = styled.span`
  flex: none;
  height: 7px;
`;
const SideLine = styled.span`
  flex: none;
  width: 18px;
  height: 1px;
  margin: 1px 0;
  background: ${color.soft};
`;
const Splitter = styled.div`
  flex: none;
  height: 4px;
  margin-right: 31px;
  background: ${color.face};
`;

const Scope = styled.div`
  flex: none;
  display: flex;
  align-items: center;
  height: 26px;
  padding-top: 4px;
`;
const ScopeLabel = styled.span`
  width: 73px;
  padding-left: 1px;
`;
const ScopeButton = styled.button`
  height: 22px;
  padding: 0 3px;
  border: 1px solid ${props => (props.$active ? color.edge : 'transparent')};
`;

const Lower = styled.div`
  flex: 1 1 238px;
  min-height: 0;
  display: flex;
  margin: 0 6px 0 1px;
  padding: 6px 4px 6px 6px;
  border: 1px solid ${color.edge};
  border-top: 0;
`;
const FieldList = styled.div`
  flex: none;
  display: flex;
  width: 236px;
  border: 1px solid ${color.edge};
  background: #fff;
`;
const FieldColumn = styled.div`
  flex: 1;
  min-width: 0;
  display: flex;
  flex-direction: column;
`;
const ListHead = styled.div`
  flex: none;
  height: 15px;
  padding-left: 2px;
  line-height: 15px;
  background: ${color.head};
  border-bottom: 1px solid ${color.edge};
`;
const Chosen = styled.div`
  flex: 1;
  min-width: 0;
  margin-left: 6px;
  border: 1px solid ${color.edge};
  background: #fff;
`;
const ChosenTable = styled.table`
  width: 100%;
  table-layout: fixed;
  border-collapse: separate;
  border-spacing: 0;
  th, td {
    height: 17px;
    padding: 0;
    line-height: 15px;
    font-weight: normal;
    text-align: left;
    border-bottom: 1px solid ${color.edge};
  }
  th { height: 16px; background: ${color.head}; padding-left: 1px; }
  th:first-child { background: ${color.face}; }
  th:first-child, td:first-child {
    width: 20px;
    border-right: 1px solid ${color.edge};
  }
  td:last-child { padding-left: 4px; }
  ${NameBox} { height: 16px; }
`;
const Mark = styled.div`
  position: relative;
  padding-left: 2px;
`;
const Scribble = styled.svg`
  position: absolute;
  left: -12px;
  top: -4px;
`;

const MessageBar = styled.div`
  flex: none;
  padding: 2px 25px;
  background: ${color.bar};
`;
const MessageButton = styled.button`
  display: flex;
  align-items: center;
  gap: 2px;
  height: 22px;
  padding: 0 2px;
  border: 1px solid ${color.edge};
`;
const WindowBar = styled.nav`
  flex: none;
  display: flex;
  gap: 1px;
  height: 22px;
  padding: 0 1px 2px;
  background: ${color.face};
`;
const WindowButton = styled.button`
  display: flex;
  align-items: center;
  gap: 2px;
  flex: 0 1 172px;
  padding: 0 1px;
  border: 1px solid ${color.edge};
  background: ${props => (props.$active ? color.blue : '#8ca7e6')};
  color: ${props => (props.$active ? '#fff' : '#d5e2fa')};
`;
const StatusBar = styled.footer`
  flex: none;
  display: flex;
  gap: 5px;
  height: 20px;
  padding-bottom: 1px;
  background: ${color.face};
`;
const StatusCell = styled.span`
  display: flex;
  align-items: center;
  gap: 1px;
  padding: 0 2px;
  border: 1px solid ${color.soft};
  color: ${props => (props.$off ? '#8b867c' : '#000')};
`;
const StatusText = styled(StatusCell)`
  flex: 1;
  padding-left: 4px;
`;
const Desktop = styled.div`
  flex: none;
  height: 4px;
  background:
    linear-gradient(90deg, #3c9a3c 0 92px, transparent 92px),
    linear-gradient(90deg, transparent calc(100% - 110px), #18b4f0 calc(100% - 110px)),
    linear-gradient(#1c50c8, #3c84f0);
`;
